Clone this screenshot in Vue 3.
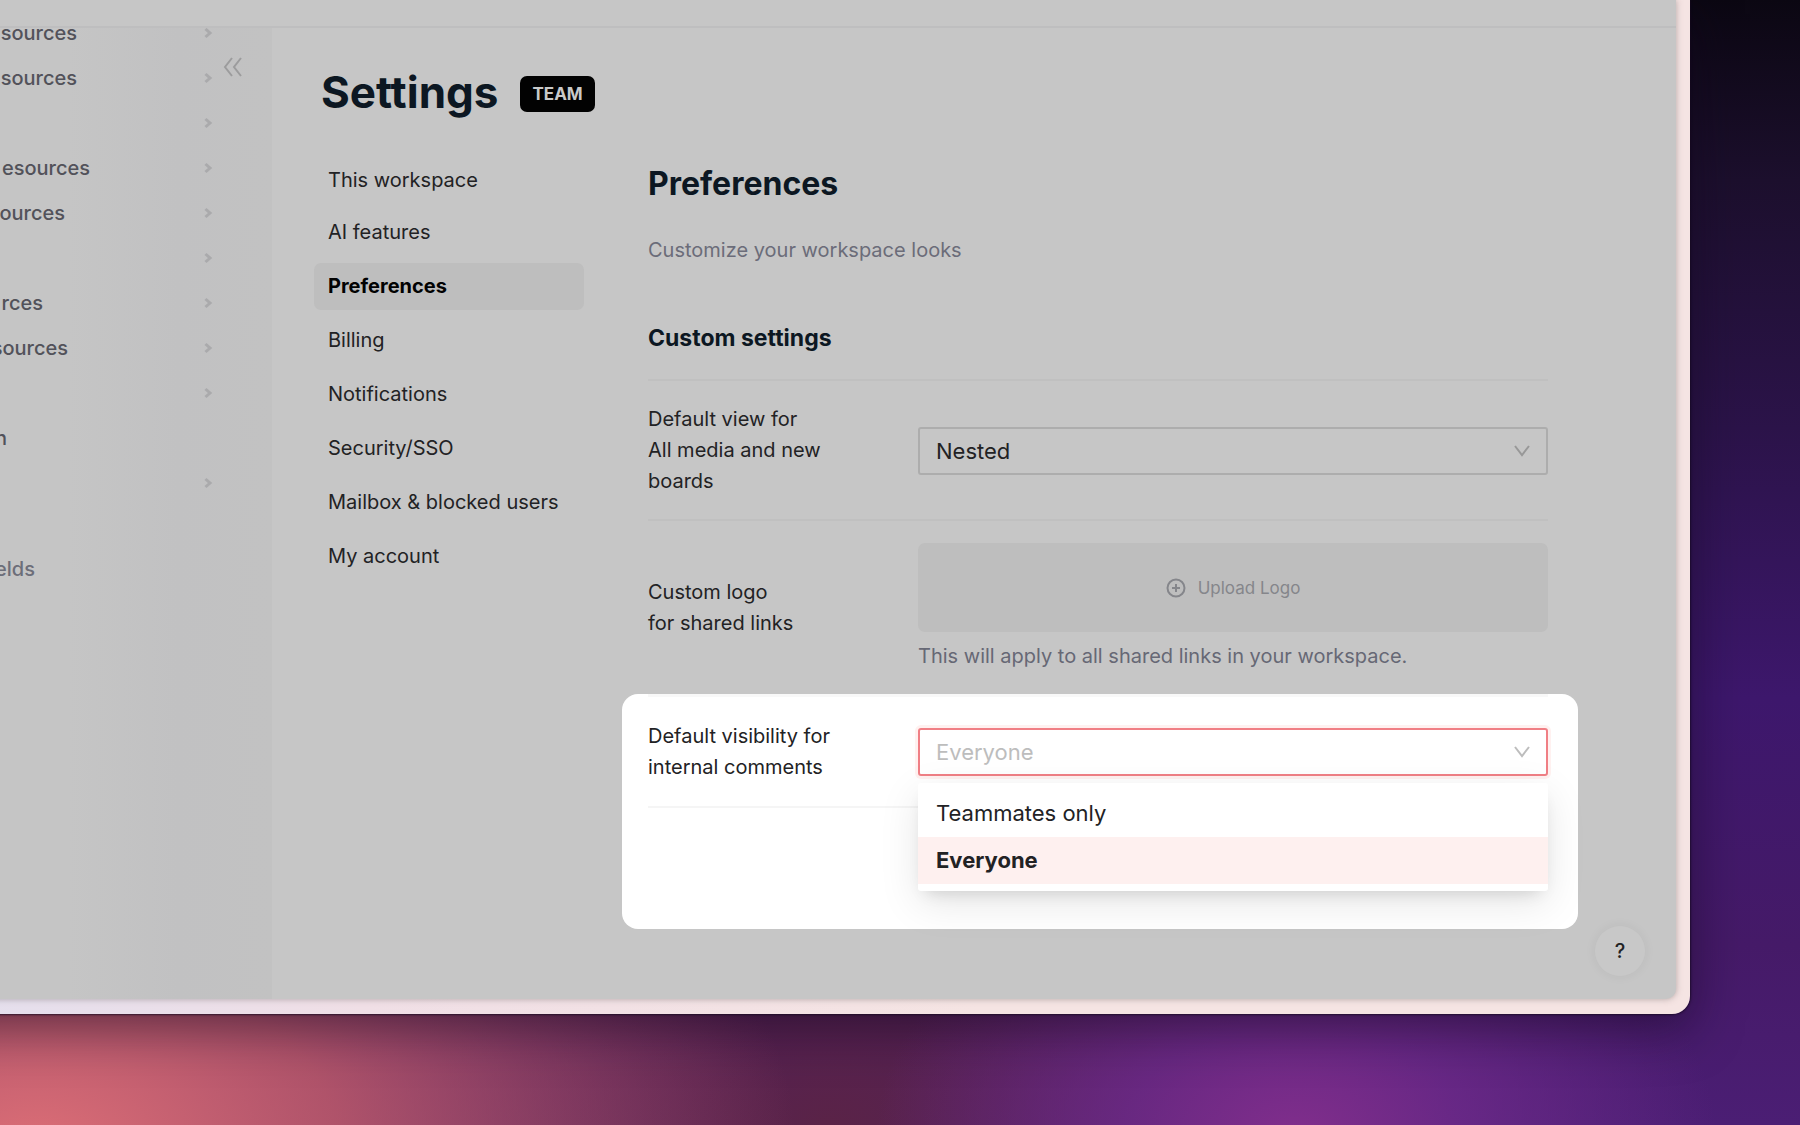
<script setup>
import { ref } from 'vue';

// width is the visible part of a label, the sidebar is scrolled off to the left
const folders = [
  { label: 'sources', width: 77, arrow: true },
  { label: 'sources', width: 77, arrow: true },
  { label: '', width: 0, arrow: true },
  { label: 'esources', width: 90, arrow: true },
  { label: 'ources', width: 65, arrow: true },
  { label: '', width: 0, arrow: true },
  { label: 'rces', width: 43, arrow: true },
  { label: 'sources', width: 68, arrow: true },
  { label: '', width: 0, arrow: true },
  { label: 'n', width: 7, arrow: false },
  { label: '', width: 0, arrow: true },
];

const sections = [
  'This workspace',
  'AI features',
  'Preferences',
  'Billing',
  'Notifications',
  'Security/SSO',
  'Mailbox & blocked users',
  'My account',
];

const options = ['Teammates only', 'Everyone'];
const active = ref('Preferences');
const view = ref('Nested');
const visibility = ref('Everyone');
</script>

<template>
  <div class="desktop">
    <div class="window">
      <div class="app">
        <header class="topbar"></header>

        <div class="body">
          <aside class="sidebar">
            <ul class="folders">
              <li v-for="(folder, i) in folders" :key="i" class="folder">
                <span class="folder-label" :style="{ width: folder.width + 'px' }">
                  <span>{{ folder.label }}</span>
                </span>
                <svg v-if="folder.arrow" class="arrow" viewBox="0 0 10 12">
                  <path d="M2.5 2 7 6 2.5 10" />
                </svg>
              </li>
            </ul>
            <span class="folder-label fields"><span>elds</span></span>
            <button class="collapse" aria-label="Collapse sidebar">
              <svg viewBox="0 0 20 22">
                <path d="M9 2 2 11l7 9M18 2l-7 9 7 9" />
              </svg>
            </button>
          </aside>

          <main class="main">
            <div class="title">
              <h1>Settings</h1>
              <span class="badge">TEAM</span>
            </div>

            <div class="columns">
              <nav class="nav">
                <a
                  v-for="section in sections"
                  :key="section"
                  href="#"
                  :class="{ active: section === active }"
                  @click.prevent="active = section"
                >{{ section }}</a>
              </nav>

              <section class="content">
                <h2>Preferences</h2>
                <p class="intro">Customize your workspace looks</p>
                <h3>Custom settings</h3>

                <div class="row view-row">
                  <label for="view">Default view for<br>All media and new<br>boards</label>
                  <div class="select">
                    <select id="view" v-model="view">
                      <option>Nested</option>
                      <option>Flat</option>
                    </select>
                    <svg viewBox="0 0 16 12"><path d="M1 1l7 9 7-9" /></svg>
                  </div>
                </div>

                <div class="row logo-row">
                  <label for="logo">Custom logo<br>for shared links</label>
                  <div>
                    <button id="logo" class="upload">
                      <svg viewBox="0 0 20 20">
                        <circle cx="10" cy="10" r="8.5" />
                        <path d="M10 6v8M6 10h8" />
                      </svg>
                      Upload Logo
                    </button>
                    <p class="hint">This will apply to all shared links in your workspace.</p>
                  </div>
                </div>

                <div class="spotlight">
                  <div class="row">
                    <label for="visibility">Default visibility for<br>internal comments</label>
                    <div class="select open">
                      <select id="visibility" v-model="visibility">
                        <option v-for="option in options" :key="option">{{ option }}</option>
                      </select>
                      <svg viewBox="0 0 16 12"><path d="M1 1l7 9 7-9" /></svg>
                      <ul class="menu" role="listbox">
                        <li
                          v-for="option in options"
                          :key="option"
                          role="option"
                          :aria-selected="option === visibility"
                          :class="{ selected: option === visibility }"
                          @click="visibility = option"
                        >{{ option }}</li>
                      </ul>
                    </div>
                  </div>
                </div>
              </section>
            </div>

            <button class="help">?</button>
          </main>
        </div>
      </div>
    </div>
  </div>
</template>

<style>
body {
  margin: 0;
}
</style>

<style scoped>
* {
  box-sizing: border-box;
}

.desktop {
  display: flex;
  min-height: 100vh;
  padding: 0 110px 111px 0;
  overflow: hidden;
  font-family: Inter, "Liberation Sans", sans-serif;
  font-size: 20px;
  color: #222224;
  background:
    radial-gradient(ellipse 760px 460px at 2% 102%, #dc6e76 0%, rgba(200, 96, 106, 0.8) 40%, rgba(120, 50, 80, 0) 100%),
    radial-gradient(ellipse 420px 280px at 72% 101%, #812e8c 0%, rgba(110, 42, 138, 0.8) 40%, rgba(80, 30, 110, 0) 100%),
    radial-gradient(ellipse 620px 420px at 46% 100%, #5a2347 0%, rgba(90, 35, 71, 0) 100%),
    linear-gradient(#0b0712 0%, #1c0f2d 16%, #2b1349 38%, #3d176c 62%, #451a68 84%, #4b1e74 100%);
}

/* runs past the left edge so that its shadow does too */
.window {
  display: flex;
  flex: 1;
  min-width: 0;
  margin-left: -80px;
  padding: 0 14px 15px 0;
  border-radius: 0 0 18px 0;
  background: linear-gradient(90deg, #e3dfee, #f0dfe6 25%, #f5e4e3 60%);
  box-shadow: 0 0 2px 1px rgba(20, 8, 30, 0.7), 0 14px 50px rgba(15, 5, 25, 0.5);
}

.app {
  display: flex;
  flex: 1;
  flex-direction: column;
  min-width: 0;
  padding-left: 80px;
  border-radius: 0 0 10px 0;
  background: #c6c6c6;
  box-shadow: 0 0 6px rgba(110, 100, 100, 0.5);
}

.topbar {
  height: 28px;
  border-bottom: 2px solid #bebebf;
}

.body {
  display: flex;
  flex: 1;
}

.sidebar {
  position: relative;
  flex: none;
  width: 272px;
  overflow: hidden;
  background: linear-gradient(90deg, #c5c5c5 25%, #c1c1c2 65%, #c2c2c2);
}

.folders {
  margin: -18px 0 0;
  padding: 0;
  list-style: none;
}

.folder {
  display: flex;
  align-items: center;
  justify-content: space-between;
  height: 45px;
  padding-right: 59px;
}

.folder-label {
  display: flex;
  justify-content: flex-end;
  overflow: hidden;
  font-weight: 500;
  line-height: 30px;
  color: #52525a;
}

.fields {
  width: 35px;
  margin-top: 49px;
  color: #6c6e79;
}

.arrow {
  width: 10px;
  height: 12px;
  fill: none;
  stroke: #aaaaac;
  stroke-width: 3;
}

.collapse {
  position: absolute;
  top: 28px;
  right: 29px;
  padding: 0;
  border: 0;
  background: none;
}

.collapse svg {
  display: block;
  width: 20px;
  height: 22px;
  fill: none;
  stroke: #9c9c9d;
  stroke-width: 2;
}

.main {
  position: relative;
  flex: 1;
  min-width: 0;
  padding: 36px 128px 70px 42px;
}

.title {
  display: flex;
  align-items: center;
  gap: 22px;
  padding-left: 7px;
}

h1,
h2,
h3,
p {
  margin: 0;
}

h1,
h2,
h3 {
  font-weight: 700;
  color: #0c1722;
}

h1 {
  padding-bottom: 4px;
  font-size: 44px;
  line-height: 56px;
}

.badge {
  padding: 0 12px;
  border-radius: 7px;
  font-size: 17px;
  font-weight: 700;
  line-height: 36px;
  color: #c9c9c9;
  background: #020202;
}

.columns {
  display: flex;
  gap: 64px;
  margin-top: 34px;
}

.nav {
  display: flex;
  flex: none;
  flex-direction: column;
  gap: 7px;
  width: 270px;
}

.nav a {
  padding: 0 14px;
  border-radius: 7px;
  line-height: 47px;
  white-space: nowrap;
  color: #222224;
  text-decoration: none;
}

.nav a:first-child {
  line-height: 44px;
}

.nav .active {
  font-weight: 700;
  color: #020202;
  background: #bebebe;
}

.content {
  flex: 1;
  min-width: 0;
}

h2 {
  font-size: 32px;
  line-height: 52px;
}

.intro {
  margin-top: 24px;
  line-height: 32px;
  color: #6b6c79;
}

h3 {
  margin-top: 56px;
  font-size: 23px;
  line-height: 32px;
}

.row {
  display: grid;
  grid-template-columns: 270px 1fr;
  align-items: center;
}

.row label {
  line-height: 31px;
}

.view-row {
  margin-top: 25px;
  padding: 23px 0 22px;
  border-top: 2px solid #c0c0c0;
  border-bottom: 2px solid #c0c0c0;
}

.logo-row {
  padding: 22px 0;
}

.select {
  position: relative;
}

.select select {
  width: 100%;
  height: 48px;
  padding: 0 16px;
  border: 2px solid #adadad;
  border-radius: 3px;
  font-family: inherit;
  font-size: 22px;
  color: #222224;
  background: transparent;
  appearance: none;
  outline: none;
}

.select > svg {
  position: absolute;
  top: 18px;
  right: 18px;
  width: 16px;
  height: 12px;
  fill: none;
  stroke: #989898;
  stroke-width: 2;
  pointer-events: none;
}

.upload {
  display: flex;
  align-items: center;
  justify-content: center;
  gap: 12px;
  width: 100%;
  height: 89px;
  border: 0;
  border-radius: 7px;
  font-family: inherit;
  font-size: 17px;
  color: #85868b;
  background: #bebebe;
}

.upload svg {
  width: 20px;
  height: 20px;
  fill: none;
  stroke: #85868b;
  stroke-width: 2;
}

.hint {
  margin-top: 8px;
  line-height: 32px;
  color: #666875;
}

.spotlight {
  min-height: 235px;
  margin: 0 -30px 0 -26px;
  padding: 0 30px 0 26px;
  border-radius: 16px;
  background: #fff;
}

.spotlight .row {
  padding: 24px 0 23px;
  border-top: 3px solid #f8f8f8;
  border-bottom: 2px solid #f5f5f5;
}

.open select {
  border-color: #f07f85;
  color: #bdbdbd;
  box-shadow: 0 0 0 3px #fff1f0;
}

.open > svg {
  stroke: #bdbdbd;
}

.menu {
  position: absolute;
  top: 55px;
  right: 0;
  left: 0;
  margin: 0;
  padding: 7px 0;
  border-radius: 3px;
  list-style: none;
  font-size: 22px;
  line-height: 47px;
  background: #fff;
  box-shadow: 0 8px 16px -8px rgba(0, 0, 0, 0.16), 0 12px 40px rgba(0, 0, 0, 0.1);
}

.menu li {
  padding: 0 18px;
}

.menu .selected {
  font-weight: 700;
  background: #fef0ef;
}

.help {
  position: absolute;
  right: 31px;
  bottom: 23px;
  width: 50px;
  height: 50px;
  padding: 0;
  border: 0;
  border-radius: 50%;
  font-family: inherit;
  font-size: 20px;
  font-weight: 500;
  color: #222224;
  background: #c8c8c8;
  box-shadow: 0 0 12px rgba(0, 0, 0, 0.06);
}
</style>
